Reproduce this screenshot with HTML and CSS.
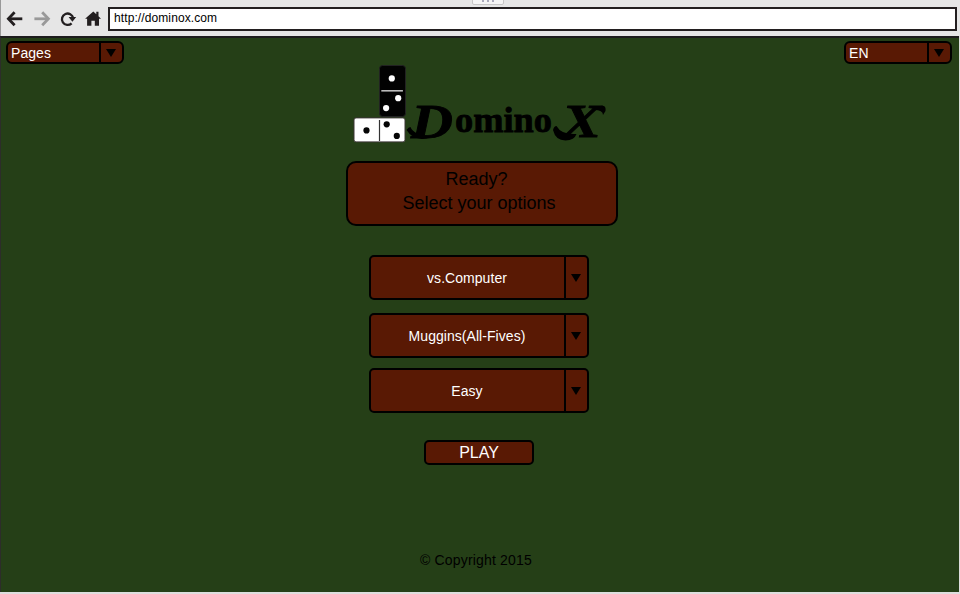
FILE: index.html
```html
<!DOCTYPE html>
<html lang="en">
<head>
<meta charset="utf-8">
<title>DominoX</title>
<link rel="stylesheet" href="styles.css">
</head>
<body>
<header class="toolbar">
  <svg class="nav-icons" viewBox="0 0 108 36" fill="none">
    <g stroke="#231f20" stroke-width="2.8">
      <path d="M22.3 18.8H9"/><path d="M14.6 12.3L8.4 18.8l6.2 6.5"/>
    </g>
    <g stroke="#999" stroke-width="2.8">
      <path d="M34.4 18.8h13.3"/><path d="M42.2 12.3l6.2 6.5-6.2 6.5"/>
    </g>
    <path d="M71.6 23.3A5.7 5.7 0 1 1 73.2 18" stroke="#231f20" stroke-width="2.3"/>
    <path d="M68.6 17h7.6l-3.8 4.8z" fill="#231f20"/>
    <path d="M93.3 11.4l3 2.8v-2.5h2.2v4.5l2.5 2.5h-2v7h-4.2v-5h-3.4v5h-4.3v-7h-2z" fill="#231f20"/>
  </svg>
  <div class="url">http://dominox.com</div>
  <div class="tab-handle"><i></i><i></i><i></i></div>
</header>
<main class="page">
  <div class="top">
    <div class="select small pages"><span class="label">Pages</span><span class="arrow"></span></div>
    <div class="select small lang"><span class="label">EN</span><span class="arrow"></span></div>
  </div>
  <svg class="logo" viewBox="350 60 262 86">
    <rect x="379.5" y="65.5" width="26" height="51" rx="3" fill="#020202" stroke="#222"/>
    <path d="M381.3 90.8h21.6" stroke="#bbb" stroke-width="1.6"/>
    <g fill="#fff"><circle cx="391.8" cy="78.4" r="3.1"/><circle cx="398.2" cy="98.2" r="3.1"/><circle cx="386.1" cy="108.1" r="3.1"/></g>
    <rect x="354" y="117.9" width="51" height="24" rx="2" fill="#fff" stroke="#3b3535"/>
    <path d="M379.5 120v21" stroke="#333" stroke-width="1.2"/>
    <g fill="#050505"><circle cx="366.5" cy="130.4" r="3.1"/><circle cx="386.7" cy="124.3" r="3.1"/><circle cx="396.8" cy="135.9" r="3.1"/></g>
    <text class="swash" x="411" y="137.5" font-size="48" textLength="42" lengthAdjust="spacingAndGlyphs">D</text>
    <text class="word" x="455" y="131.7" font-size="36" textLength="97" lengthAdjust="spacingAndGlyphs">omino</text>
    <text class="swash" x="562" y="137" font-size="47" textLength="39" lengthAdjust="spacingAndGlyphs">X</text>
    <!-- flourishes trailing from the capitals -->
    <path d="M406.5 130q2-3 4-3 3 8 20 9.500-4 3-9 2.500-10-1-15-9z"/>
    <path d="M553 130q1-4 3.500-4 5 9 20 8-2 6-11 6.500-10 0-12.500-10.500z"/>
    <path d="M594 110q5-5 10-4 2 1 1.500 5l-2.500 4q0-5-9-5z"/>
  </svg>
  <div class="ready"><span class="question">Ready?</span><br>Select your options</div>
  <div class="options">
    <div class="select"><span class="label">vs.Computer</span><span class="arrow"></span></div>
    <div class="select"><span class="label">Muggins(All-Fives)</span><span class="arrow"></span></div>
    <div class="select level"><span class="label">Easy</span><span class="arrow"></span></div>
  </div>
  <div class="play">PLAY</div>
  <footer>© Copyright 2015</footer>
</main>
</body>
</html>
```
FILE: styles.css
```css
* { box-sizing: border-box; }

body {
  margin: 0;
  width: 960px;
  height: 594px;
  overflow: hidden;
  background: #dedede;
  font: 14px/16px "Liberation Sans", Arial, sans-serif;
}

.toolbar {
  position: relative;
  display: flex;
  height: 36px;
  background: #e6e6e6;
  border-left: 1px solid #999;
}

.nav-icons {
  width: 108px;
  height: 36px;
  margin-left: -1px;
}

.url {
  width: 849px;
  height: 24px;
  margin-top: 7px;
  padding: 1px 4px;
  border: 2px solid #231f20;
  background: #fff;
  color: #000;
  font-size: 12px;
  line-height: 17px;
  letter-spacing: .1px;
}

.tab-handle {
  position: absolute;
  left: 471px;
  top: -4px;
  display: flex;
  justify-content: center;
  gap: 3px;
  width: 32px;
  height: 9px;
  padding-top: 3px;
  border: 1px solid #c6c6c6;
  border-radius: 2px;
  background: #f5f5f5;
}

.tab-handle i {
  width: 2px;
  height: 2px;
  background: #aab;
}

.page {
  display: flex;
  flex-direction: column;
  width: 959px;
  height: 556px;
  border-top: 2px solid #1d1c1d;
  border-left: 1px solid #2d2d2a;
  background: #253f17;
}

.top {
  display: flex;
  justify-content: space-between;
  padding: 3px 7px 0 5px;
}

.select {
  display: flex;
  width: 220px;
  height: 45px;
  border: 2px solid #000;
  border-radius: 5px;
  background: #591904;
  color: #fff;
}

.label {
  flex: 1;
  align-self: center;
  padding-right: 1px;
  text-align: center;
  letter-spacing: .05px;
}

.arrow {
  display: flex;
  align-items: center;
  justify-content: center;
  width: 23px;
  padding-right: 1px;
  border-left: 2px solid #000;
}

.arrow::before {
  content: "";
  border: 5px solid transparent;
  border-top: 8px solid #000;
  border-bottom: 0;
}

.small {
  height: 23px;
  border-radius: 6px;
}

.small .label {
  padding-left: 3px;
  padding-top: 1px;
  text-align: left;
}

.pages { width: 118px; }
.lang { width: 108px; }

.logo {
  width: 262px;
  height: 86px;
  margin: -4px 0 0 349px;
  overflow: visible;
}

.swash,
.word {
  font-family: "Liberation Serif", serif;
  font-weight: 700;
  fill: #000;
  stroke: #000;
  stroke-width: .8px;
}

.swash { font-style: italic; }

.ready {
  width: 272px;
  height: 65px;
  margin: 15px 0 0 345px;
  padding: 4px 6px 0 0;
  border: 2px solid #000;
  border-radius: 10px;
  background: #591904;
  color: #000;
  font-size: 18px;
  line-height: 24px;
  text-align: center;
}

.question { padding-right: 5px; }

.options {
  display: flex;
  flex-direction: column;
  gap: 13px;
  margin: 29px 0 0 368px;
}

.level { margin-top: -3px; }

.play {
  width: 110px;
  height: 25px;
  margin: 27px 0 0 423px;
  border: 2px solid #000;
  border-radius: 5px;
  background: #591904;
  color: #fff;
  font-size: 16px;
  line-height: 21px;
  text-align: center;
}

footer {
  margin: 87px 0 0 419px;
  color: #000;
  letter-spacing: .17px;
}
```
